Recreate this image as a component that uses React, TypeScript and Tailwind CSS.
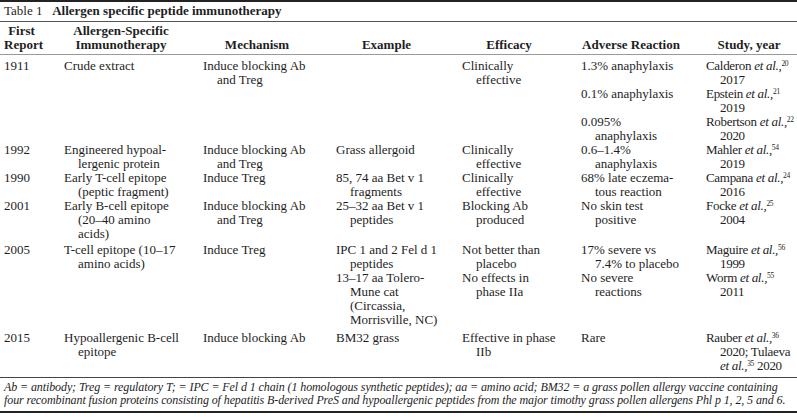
import React from "react";

type L = React.ReactNode;

const Cell = ({ lines, tight = false }: { lines: L[]; tight?: boolean }) => (
  <div
    className={
      tight
        ? "pr-[4px] pl-[14px] -indent-[14px] whitespace-nowrap tracking-[-0.3px]"
        : "pr-[16px] pl-[14px] -indent-[14px] whitespace-nowrap"
    }
  >
    {lines.map((l, i) => (
      <React.Fragment key={i}>
        {i > 0 && <br />}
        {l}
      </React.Fragment>
    ))}
  </div>
);

const Ref = ({ name, n }: { name: string; n: number }) => (
  <>
    {name} <i>et al.,</i>
    <sup className="text-[7.5px]">{n}</sup>
  </>
);

const cols = "grid grid-cols-[60px_139px_133px_126px_119px_125px_1fr]";

type Row = { c: L[][]; pt?: string };

const rows: Row[] = [
  {
    c: [
      ["1911"],
      ["Crude extract"],
      ["Induce blocking Ab", "and Treg"],
      [],
      ["Clinically", "effective"],
      ["1.3% anaphylaxis"],
      [<Ref name="Calderon" n={20} />, "2017"],
    ],
  },
  {
    c: [[], [], [], [], [], ["0.1% anaphylaxis"], [<Ref name="Epstein" n={21} />, "2019"]],
  },
  {
    c: [[], [], [], [], [], ["0.095%", "anaphylaxis"], [<Ref name="Robertson" n={22} />, "2020"]],
  },
  {
    c: [
      ["1992"],
      ["Engineered hypoal-", "lergenic protein"],
      ["Induce blocking Ab", "and Treg"],
      ["Grass allergoid"],
      ["Clinically", "effective"],
      ["0.6–1.4%", "anaphylaxis"],
      [<Ref name="Mahler" n={54} />, "2019"],
    ],
  },
  {
    c: [
      ["1990"],
      ["Early T-cell epitope", "(peptic fragment)"],
      ["Induce Treg"],
      ["85, 74 aa Bet v 1", "fragments"],
      ["Clinically", "effective"],
      ["68% late eczema-", "tous reaction"],
      [<Ref name="Campana" n={24} />, "2016"],
    ],
  },
  {
    c: [
      ["2001"],
      ["Early B-cell epitope", "(20–40 amino", "acids)"],
      ["Induce blocking Ab", "and Treg"],
      ["25–32 aa Bet v 1", "peptides"],
      ["Blocking Ab", "produced"],
      ["No skin test", "positive"],
      [<Ref name="Focke" n={25} />, "2004"],
    ],
  },
  {
    pt: "pt-[2px]",
    c: [
      ["2005"],
      ["T-cell epitope (10–17", "amino acids)"],
      ["Induce Treg"],
      ["IPC 1 and 2 Fel d 1", "peptides"],
      ["Not better than", "placebo"],
      ["17% severe vs", "7.4% to placebo"],
      [<Ref name="Maguire" n={56} />, "1999"],
    ],
  },
  {
    c: [
      [],
      [],
      [],
      ["13–17 aa Tolero-", "Mune cat", "(Circassia,", "Morrisville, NC)"],
      ["No effects in", "phase IIa"],
      ["No severe", "reactions"],
      [<Ref name="Worm" n={55} />, "2011"],
    ],
  },
  {
    pt: "pt-[4px]",
    c: [
      ["2015"],
      ["Hypoallergenic B-cell", "epitope"],
      ["Induce blocking Ab"],
      ["BM32 grass"],
      ["Effective in phase", "IIb"],
      ["Rare"],
      [
        <Ref name="Rauber" n={36} />,
        "2020; Tulaeva",
        <>
          <i>et al.,</i>
          <sup className="text-[7.5px]">35</sup> 2020
        </>,
      ],
    ],
  },
];

const headers: L[][] = [
  ["First", "Report"],
  ["Allergen-Specific", "Immunotherapy"],
  ["Mechanism"],
  ["Example"],
  ["Efficacy"],
  ["Adverse Reaction"],
  ["Study, year"],
];

export default function App() {
  return (
    <div
      className="w-[797px] h-[419px] bg-white text-[#1e1e1e] text-[13px] leading-[14px]"
      style={{ fontFamily: '"Liberation Serif", "Times New Roman", serif' }}
    >
      <div className="border-t-2 border-[#222]" />
      <div className="pl-[4px] pt-[2px] pb-[3px] border-b border-[#555] whitespace-nowrap">
        Table 1&nbsp;&nbsp; <b>Allergen specific peptide immunotherapy</b>
      </div>
      <div className={cols + " pl-[4px] pt-[2px] pb-[2px] border-b border-[#9a9a9a] items-end font-bold"}>
        {headers.map((h, i) => (
          <div key={i} className={i === 6 ? "text-center pr-[5px]" : "text-center pr-[25px]"}>
            {h.map((l, j) => (
              <div key={j} className="whitespace-nowrap">
                {l}
              </div>
            ))}
          </div>
        ))}
      </div>
      <div className="pt-[4px] pb-[4px] border-b border-[#444]">
        {rows.map((r, i) => (
          <div key={i} className={cols + " pl-[4px] " + (r.pt ?? "")}>
            {r.c.map((c, j) => (
              <Cell key={j} lines={c} tight={j === 6} />
            ))}
          </div>
        ))}
      </div>
      <div className="pl-[4px] pt-[3px] pb-[4px] italic text-[12px] tracking-[-0.1px] leading-[13px] border-b-2 border-[#222]">
        <div className="whitespace-nowrap">
          Ab = antibody; Treg = regulatory T; = IPC = Fel d 1 chain (1 homologous synthetic peptides); aa = amino acid; BM32 = a grass pollen allergy vaccine containing
        </div>
        <div className="whitespace-nowrap">
          four recombinant fusion proteins consisting of hepatitis B-derived PreS and hypoallergenic peptides from the major timothy grass pollen allergens Phl p 1, 2, 5 and 6.
        </div>
      </div>
    </div>
  );
}
